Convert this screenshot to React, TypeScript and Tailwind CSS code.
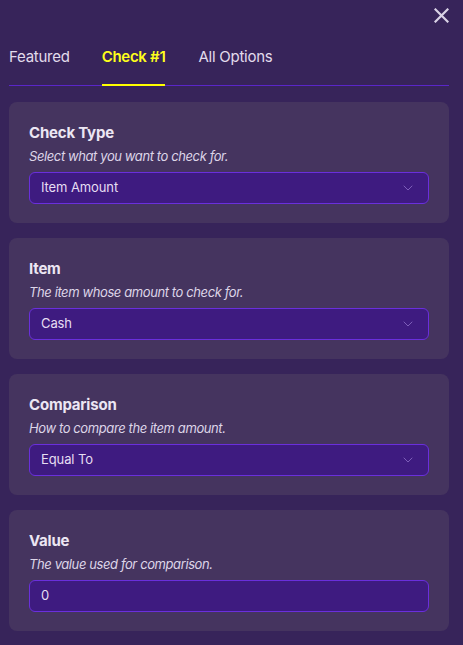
import { ChevronDown } from "lucide-react";

const sections = [
  { title: "Check Type", hint: "Select what you want to check for.", value: "Item Amount", select: true },
  { title: "Item", hint: "The item whose amount to check for.", value: "Cash", select: true },
  { title: "Comparison", hint: "How to compare the item amount.", value: "Equal To", select: true },
  { title: "Value", hint: "The value used for comparison.", value: "0", select: false },
];

function Field({ title, hint, value, select }: (typeof sections)[number]) {
  return (
    <div className="rounded-lg bg-[#45345f] px-5 pt-[20px] pb-[19px]">
      <div className="text-[15px] leading-[22px] font-bold tracking-[-0.2px] text-[#ece6f3]">{title}</div>
      <div className="mt-[3px] text-[13px] leading-[18px] italic tracking-[-0.4px] text-[#ddd5e8]">{hint}</div>
      <div className="mt-[7px] flex h-8 items-center justify-between rounded-md border border-[#6a2fdc] bg-[#3e1b80] pl-[11px] pr-[12px]">
        <span className="text-[13px] tracking-[-0.1px] text-[#e6def2]">{value}</span>
        {select && <ChevronDown className="h-4 w-4 text-[#8a6cc4]" strokeWidth={1.25} />}
      </div>
    </div>
  );
}

export default function App() {
  return (
    <div className="h-[645px] w-[463px] bg-[#37245a] font-['Inter','Liberation_Sans',sans-serif]">
      <div className="flex justify-end pt-[8px] pr-[14px]">
        <svg width="15" height="15" viewBox="0 0 15 15" className="text-[#d9d2e6]">
          <path d="M1.5 1.5L13.5 13.5M13.5 1.5L1.5 13.5" stroke="currentColor" strokeWidth="2.2" strokeLinecap="square" />
        </svg>
      </div>
      <div className="ml-[9px] mt-[23px] flex w-[440px] border-b border-[#5a26c9] text-[15px] tracking-[-0.25px]">
        <div className="pb-[16px] text-[#e2dcec]">Featured</div>
        <div className="relative ml-[32px] pb-[16px] font-semibold tracking-[-0.3px] text-[#ffff1a]">
          Check #1
          <div className="absolute -bottom-[1px] left-0 right-0 h-[2px] bg-[#ffff00]" />
        </div>
        <div className="ml-[33px] pb-[16px] text-[#e2dcec]">All Options</div>
      </div>
      <div className="ml-[9px] mt-[16px] flex w-[440px] flex-col gap-[15px]">
        {sections.map((s) => (
          <Field key={s.title} {...s} />
        ))}
      </div>
    </div>
  );
}
